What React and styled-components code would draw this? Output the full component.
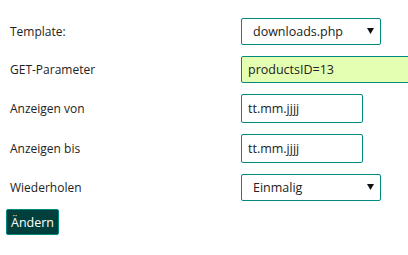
import React from "react";
import styled, { createGlobalStyle } from "styled-components";

const GlobalStyle = createGlobalStyle`
  body {
    margin: 0;
    background: #ffffff;
    font-family: "Open Sans", "Liberation Sans", sans-serif;
    color: #222;
  }
`;

const Form = styled.form`
  padding: 18px 0 0 6px;
`;

const Grid = styled.div`
  display: grid;
  grid-template-columns: 235px 1fr;
  row-gap: 11px;
  align-items: center;
`;

const Label = styled.label`
  padding-left: 4px;
  font-size: 12px;
  color: #222;
`;

const Field = styled.div`
  height: ${(p) => p.$h}px;
  width: ${(p) => (p.$w ? `${p.$w}px` : "auto")};
  box-sizing: border-box;
  border: 1px solid #008a80;
  border-radius: 2px;
  background: ${(p) => (p.$highlight ? "#e5ffb2" : "#fff")};
  display: flex;
  align-items: center;
  padding: 0 ${(p) => (p.$select ? "6px 0 11px" : "6px")};
  font-size: 12.5px;
  color: #222;
  margin-right: ${(p) => (p.$bleed ? "-2px" : "0")};
`;

const Value = styled.span`
  flex: 1;
`;

const Arrow = styled.svg`
  width: 7px;
  height: 6px;
  flex-shrink: 0;
  margin-top: -1px;
`;

const Button = styled.button`
  margin-top: 8px;
  height: 26px;
  padding: 0 4px;
  background: #003f3b;
  color: #fff;
  border: 1px solid #008a80;
  border-radius: 2px;
  font-family: "Open Sans", "Liberation Sans", sans-serif;
  font-size: 12.5px;
`;

const Select = ({ value }) => (
  <Field $h={27} $w={140} $select>
    <Value>{value}</Value>
    <Arrow viewBox="0 0 7 6">
      <path d="M0 0 H7 L3.5 6 Z" fill="#111" />
    </Arrow>
  </Field>
);

export default function App() {
  return (
    <>
      <GlobalStyle />
      <Form>
        <Grid>
          <Label>Template:</Label>
          <Select value="downloads.php" />
          <Label>GET-Parameter</Label>
          <Field $h={27} $highlight $bleed>productsID=13</Field>
          <Label>Anzeigen von</Label>
          <Field $h={29} $w={122}>tt.mm.jjjj</Field>
          <Label>Anzeigen bis</Label>
          <Field $h={29} $w={122}>tt.mm.jjjj</Field>
          <Label>Wiederholen</Label>
          <Select value="Einmalig" />
        </Grid>
        <Button type="button">Ändern</Button>
      </Form>
    </>
  );
}
